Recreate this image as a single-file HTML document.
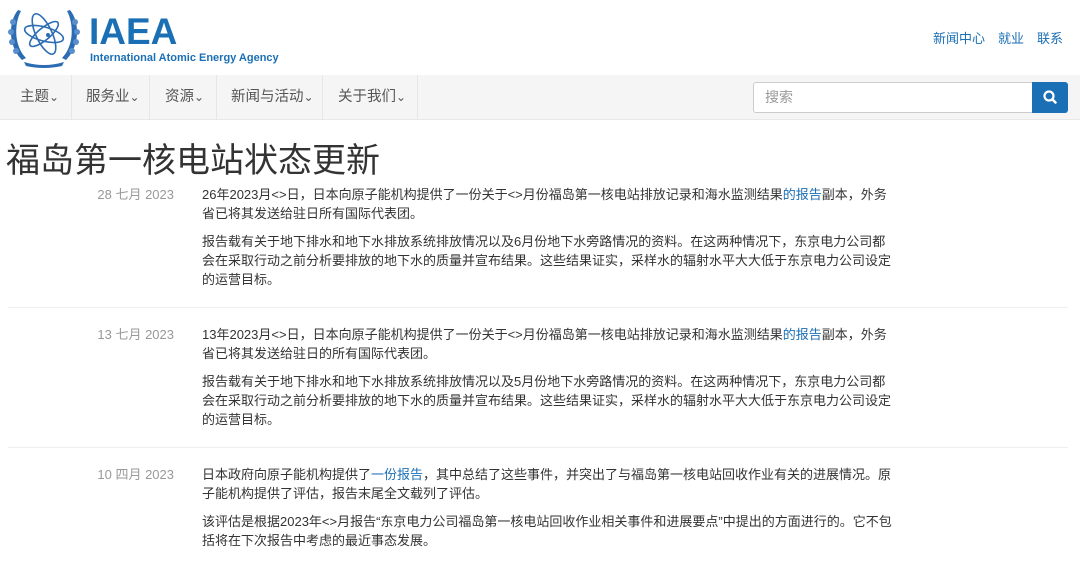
<!DOCTYPE html>
<html><head><meta charset="utf-8"><style>
*{margin:0;padding:0;box-sizing:border-box}
body{width:1080px;height:562px;overflow:hidden;background:#fff;font-family:"Liberation Sans","Noto Sans CJK SC",sans-serif;color:#333;position:relative}
.a{position:absolute;white-space:nowrap}
.t{font-size:13px;line-height:20px;left:202px;color:#333}
.d{font-size:13px;line-height:20px;right:906px;color:#999}
a{color:#1b6fb5;text-decoration:none}
.nav{position:absolute;left:0;top:75px;width:1080px;height:45px;background:#f5f5f5;border-bottom:1px solid #e8e8e8}
.ni{position:absolute;top:0;height:45px;line-height:45px;font-size:14.5px;color:#555;border-right:1px solid #e6e6e6}
.sep{position:absolute;left:8px;width:1060px;height:1px;background:#eee}
</style></head><body>
<svg class="a" style="left:4px;top:2px" width="80" height="68" viewBox="0 0 80 68">
<g fill="none" stroke="#2b6cb3" stroke-width="1.6">
<ellipse cx="40" cy="32" rx="8" ry="22" transform="rotate(-25 40 32)"/>
<ellipse cx="40" cy="32" rx="20" ry="7" transform="rotate(15 40 32)"/>
<ellipse cx="40" cy="32" rx="18" ry="6" transform="rotate(-40 40 32)"/>
</g>
<circle cx="44" cy="33" r="2" fill="#2b6cb3"/>
<g fill="#2b6cb3">
<path d="M14 8 C4 20 4 44 18 58 L22 56 C10 44 10 22 17 9Z"/>
<path d="M66 8 C76 20 76 44 62 58 L58 56 C70 44 70 22 63 9Z"/>
<path d="M20 60 Q40 66 60 60 L58 64 Q40 68 22 64Z"/>
</g>
<g fill="#5a8fcc"><circle cx="9" cy="20" r="3"/><circle cx="7" cy="30" r="3"/><circle cx="8" cy="40" r="3"/><circle cx="12" cy="49" r="3"/><circle cx="71" cy="20" r="3"/><circle cx="73" cy="30" r="3"/><circle cx="72" cy="40" r="3"/><circle cx="68" cy="49" r="3"/></g>
</svg>
<div class="a" style="left:89px;top:12px;font-size:37px;font-weight:bold;color:#1b6fb5;line-height:40px;letter-spacing:0px">IAEA</div>
<div class="a" style="left:90px;top:52px;font-size:11px;font-weight:bold;color:#1b6fb5">International Atomic Energy Agency</div>
<div class="a" style="left:933px;top:28px;font-size:13px;color:#1b6fb5">新闻中心</div>
<div class="a" style="left:998px;top:28px;font-size:13px;color:#1b6fb5">就业</div>
<div class="a" style="left:1037px;top:28px;font-size:13px;color:#1b6fb5">联系</div>
<div class="nav">
<div class="ni" style="left:0;width:72px;padding-left:20px">主题<small>⌄</small></div>
<div class="ni" style="left:72px;width:78px;padding-left:14px">服务业<small>⌄</small></div>
<div class="ni" style="left:150px;width:67px;padding-left:15px">资源<small>⌄</small></div>
<div class="ni" style="left:217px;width:106px;padding-left:14px">新闻与活动<small>⌄</small></div>
<div class="ni" style="left:323px;width:95px;padding-left:15px">关于我们<small>⌄</small></div>
<div class="a" style="left:753px;top:7px;width:280px;height:31px;background:#fff;border:1px solid #ccc;border-radius:3px 0 0 3px;font-size:14px;color:#999;line-height:29px;padding-left:11px">搜索</div>
<div class="a" style="left:1032px;top:7px;width:36px;height:31px;background:#1b6fb5;border-radius:0 3px 3px 0">
<svg width="36" height="31"><circle cx="17" cy="14" r="4.5" fill="none" stroke="#fff" stroke-width="2.2"/><line x1="20.5" y1="17.5" x2="23.5" y2="20.5" stroke="#fff" stroke-width="2.6" stroke-linecap="round"/></svg></div>
</div>
<div class="a" style="left:6px;top:139px;font-size:34px;line-height:44px;color:#333">福岛第一核电站状态更新</div>

<div class="a d" style="top:185px">28 七月 2023</div>
<div class="a t" style="top:185px">26年2023月&lt;&gt;日，日本向原子能机构提供了一份关于&lt;&gt;月份福岛第一核电站排放记录和海水监测结果<a>的报告</a>副本，外务</div>
<div class="a t" style="top:204px">省已将其发送给驻日所有国际代表团。</div>
<div class="a t" style="top:232px">报告载有关于地下排水和地下水排放系统排放情况以及6月份地下水旁路情况的资料。在这两种情况下，东京电力公司都</div>
<div class="a t" style="top:251px">会在采取行动之前分析要排放的地下水的质量并宣布结果。这些结果证实，采样水的辐射水平大大低于东京电力公司设定</div>
<div class="a t" style="top:270px">的运营目标。</div>
<div class="sep" style="top:307px"></div>

<div class="a d" style="top:325px">13 七月 2023</div>
<div class="a t" style="top:325px">13年2023月&lt;&gt;日，日本向原子能机构提供了一份关于&lt;&gt;月份福岛第一核电站排放记录和海水监测结果<a>的报告</a>副本，外务</div>
<div class="a t" style="top:344px">省已将其发送给驻日的所有国际代表团。</div>
<div class="a t" style="top:372px">报告载有关于地下排水和地下水排放系统排放情况以及5月份地下水旁路情况的资料。在这两种情况下，东京电力公司都</div>
<div class="a t" style="top:391px">会在采取行动之前分析要排放的地下水的质量并宣布结果。这些结果证实，采样水的辐射水平大大低于东京电力公司设定</div>
<div class="a t" style="top:410px">的运营目标。</div>
<div class="sep" style="top:447px"></div>

<div class="a d" style="top:465px">10 四月 2023</div>
<div class="a t" style="top:465px">日本政府向原子能机构提供了<a>一份报告</a>，其中总结了这些事件，并突出了与福岛第一核电站回收作业有关的进展情况。原</div>
<div class="a t" style="top:484px">子能机构提供了评估，报告末尾全文载列了评估。</div>
<div class="a t" style="top:512px">该评估是根据2023年&lt;&gt;月报告“东京电力公司福岛第一核电站回收作业相关事件和进展要点”中提出的方面进行的。它不包</div>
<div class="a t" style="top:531px">括将在下次报告中考虑的最近事态发展。</div>
</body></html>
